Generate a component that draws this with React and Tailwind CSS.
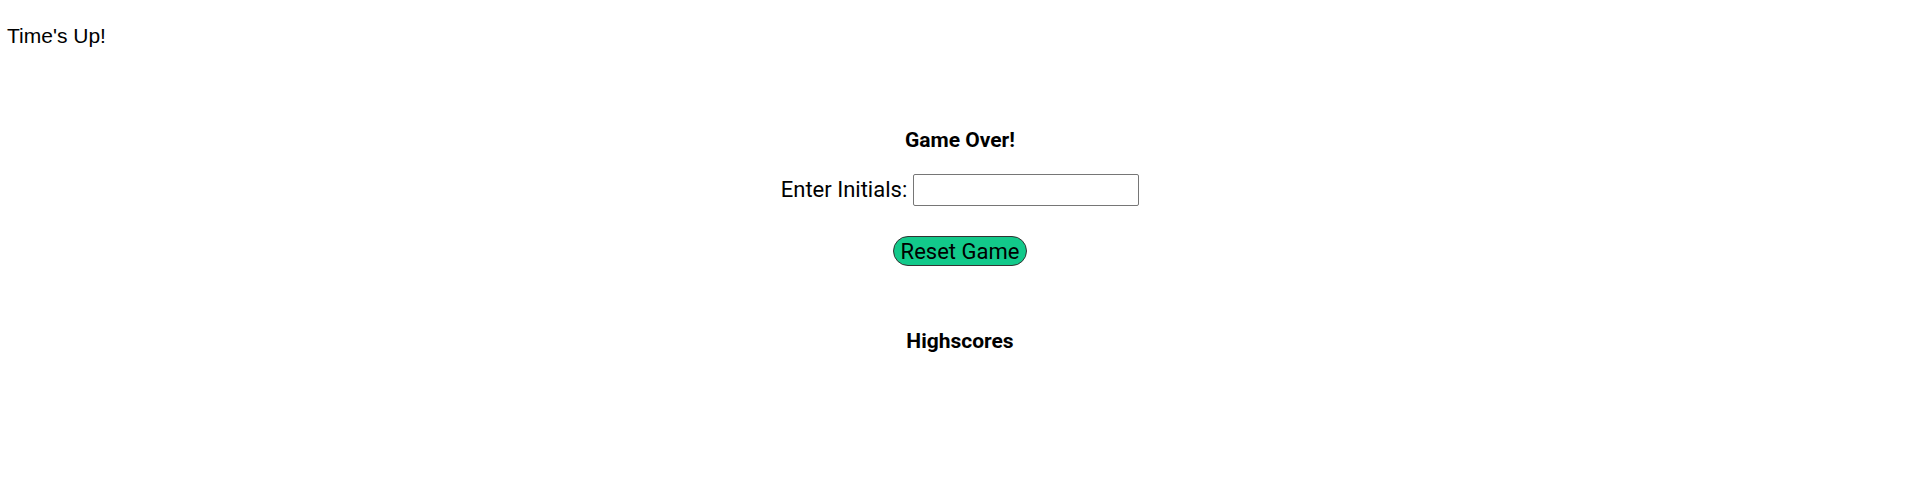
import { useState } from 'react';

export default function App() {
  const [initials, setInitials] = useState('');

  return (
    <main className="min-h-[493px] w-full bg-white text-black">
      <header className="pl-[7px] pt-[24px]">
        <p className="text-[21px] leading-[24px]" style={{ fontFamily: '"Liberation Sans", Arial, sans-serif' }}>
          Time's Up!
        </p>
      </header>

      <section
        className="flex flex-col items-center"
        style={{ fontFamily: 'Roboto, "Liberation Sans", sans-serif' }}
      >
        <h2 className="mt-[80px] text-[21px] leading-[24px] font-bold">Game Over!</h2>

        <form className="mt-[22px] flex items-center gap-[6px]" onSubmit={(e) => e.preventDefault()}>
          <label htmlFor="initials" className="text-[22px] leading-[32px]">
            Enter Initials:
          </label>
          <input
            id="initials"
            value={initials}
            onChange={(e) => setInitials(e.target.value)}
            className="h-[32px] w-[226px] rounded-[2px] border border-[#767676] px-1 text-[16px] focus:outline-none"
          />
        </form>

        <button
          type="button"
          onClick={() => setInitials('')}
          className="mt-[30px] h-[30px] w-[134px] rounded-full border border-[#333] bg-[#12c98a] pt-[1px] text-[22px] leading-[28px]"
        >
          Reset Game
        </button>

        <h2 className="mt-[63px] text-[21px] leading-[24px] font-bold">Highscores</h2>
      </section>
    </main>
  );
}
